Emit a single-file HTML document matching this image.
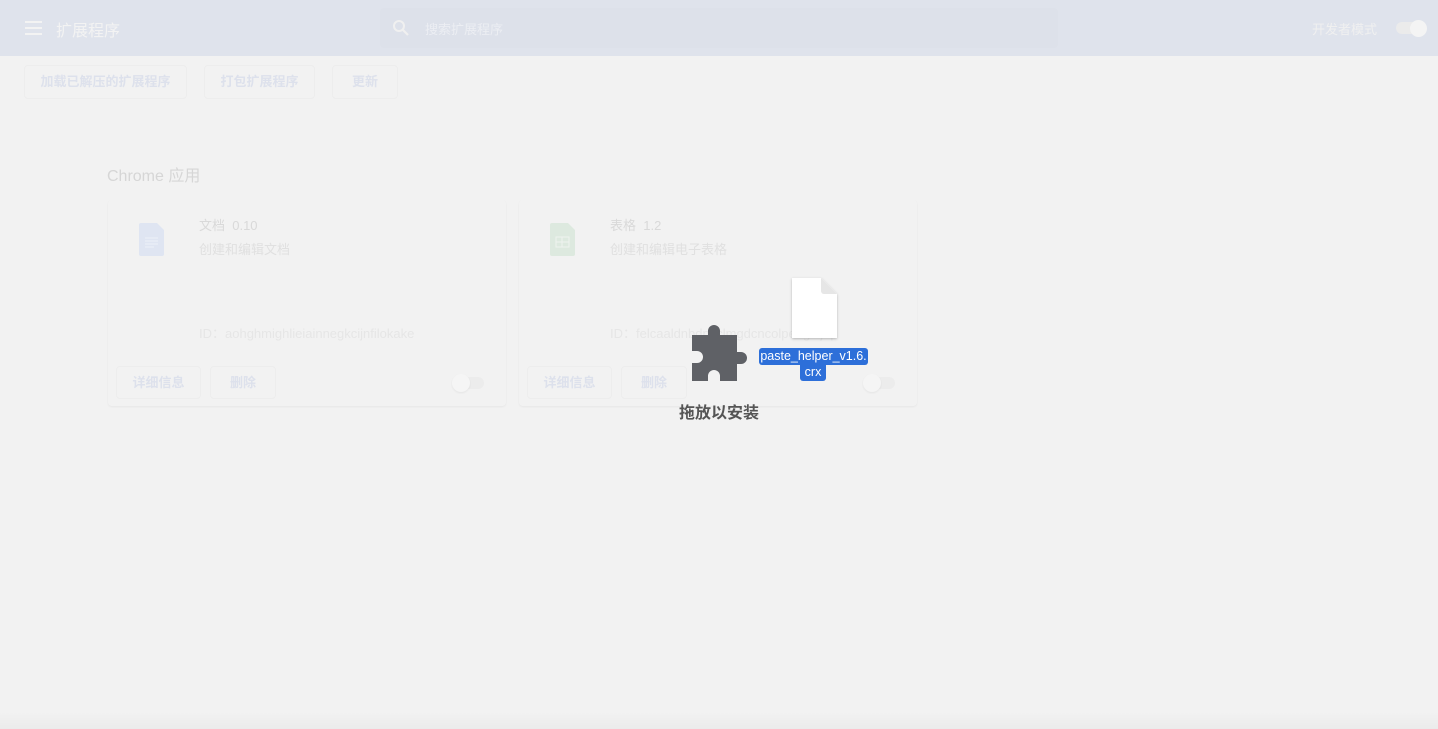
<!DOCTYPE html>
<html><head><meta charset="utf-8"><style>
*{box-sizing:border-box;margin:0;padding:0}
body{width:1438px;height:729px;overflow:hidden;background:#f2f2f2;font-family:"Liberation Sans","Noto Sans CJK SC",sans-serif;position:relative}
.hdr{position:absolute;left:0;top:0;width:1438px;height:56px;background:#dfe3ec}
.abs{position:absolute}
.btn{position:absolute;top:65px;height:34px;border:1px solid #ededed;border-radius:4px;color:#dde1ec;font-size:13px;font-weight:bold;text-align:center;line-height:32px}
.card{position:absolute;top:200px;width:398px;height:206px;background:#f2f2f2;border-radius:4px;box-shadow:0 1px 2px rgba(0,0,0,.05)}
.cb{position:absolute;top:166px;height:33px;border:1px solid #ededed;border-radius:4px;color:#dde1ec;font-size:13px;font-weight:bold;text-align:center;line-height:31px}
.t1{position:absolute;left:91px;top:15px;font-size:13px;color:#d9d9d9}
.t2{position:absolute;left:91px;top:39px;font-size:13px;color:#e0e0e0}
.t3{position:absolute;left:91px;top:123px;font-size:13px;color:#e6e6e6}
.tog{position:absolute;left:346px;top:177px;width:30px;height:12px;border-radius:6px;background:#ececec}
.tog i{position:absolute;left:-2px;top:-3px;width:18px;height:18px;border-radius:50%;background:#f5f5f5;box-shadow:0 1px 2px rgba(0,0,0,.06)}
</style></head><body>
<div class="hdr">
 <div class="abs" style="left:25px;top:21px;width:17px;height:2px;background:#f3f3f3;box-shadow:0 6px 0 #f3f3f3,0 12px 0 #f3f3f3"></div>
 <div class="abs" style="left:56px;top:17px;font-size:16px;color:#f3f3f3">扩展程序</div>
 <div class="abs" style="left:380px;top:8px;width:678px;height:40px;background:#dde1ea;border-radius:4px"></div>
 <svg class="abs" style="left:392px;top:19px" width="18" height="18" viewBox="0 0 18 18"><circle cx="7" cy="7" r="5" fill="none" stroke="#f0f0f0" stroke-width="2"/><path d="M11 11l5 5" stroke="#f0f0f0" stroke-width="2.2"/></svg>
 <div class="abs" style="left:425px;top:19px;font-size:13px;color:#eceef3">搜索扩展程序</div>
 <div class="abs" style="left:1312px;top:19px;font-size:13px;color:#f0f0f0">开发者模式</div>
 <div class="abs" style="left:1396px;top:22px;width:30px;height:12px;border-radius:6px;background:#ebebeb"></div>
 <div class="abs" style="left:1410px;top:20px;width:17px;height:17px;border-radius:50%;background:#f4f4f4"></div>
</div>
<div class="btn" style="left:24px;width:163px">加载已解压的扩展程序</div>
<div class="btn" style="left:204px;width:111px">打包扩展程序</div>
<div class="btn" style="left:332px;width:66px">更新</div>
<div class="abs" style="left:107px;top:162px;font-size:16px;color:#d6d6d6">Chrome 应用</div>

<div class="card" style="left:108px">
 <svg class="abs" style="left:31px;top:23px" width="25" height="33" viewBox="0 0 25 33"><path d="M2 0h16l7 7v24a2 2 0 0 1-2 2H2a2 2 0 0 1-2-2V2a2 2 0 0 1 2-2z" fill="#dfe5f2"/><path d="M6 15h13M6 18h13M6 21h13M6 24h9" stroke="#eef1f8" stroke-width="1"/></svg>
 <div class="t1">文档&nbsp;&nbsp;0.10</div>
 <div class="t2">创建和编辑文档</div>
 <div class="t3">ID：aohghmighlieiainnegkcijnfilokake</div>
 <div class="cb" style="left:8px;width:85px">详细信息</div>
 <div class="cb" style="left:102px;width:66px">删除</div>
 <div class="tog"><i></i></div>
</div>
<div class="card" style="left:519px">
 <svg class="abs" style="left:31px;top:23px" width="25" height="33" viewBox="0 0 25 33"><path d="M2 0h16l7 7v24a2 2 0 0 1-2 2H2a2 2 0 0 1-2-2V2a2 2 0 0 1 2-2z" fill="#dde9df"/><rect x="6" y="14" width="13" height="10" fill="none" stroke="#eef3ef"/><path d="M6 19h13M12 14v10" stroke="#eef3ef"/></svg>
 <div class="t1">表格&nbsp;&nbsp;1.2</div>
 <div class="t2">创建和编辑电子表格</div>
 <div class="t3">ID：felcaaldnbdncclmgdcncolpebgiejap</div>
 <div class="cb" style="left:8px;width:85px">详细信息</div>
 <div class="cb" style="left:102px;width:66px">删除</div>
 <div class="tog"><i></i></div>
</div>

<svg class="abs" style="left:690px;top:324px" width="60" height="58" viewBox="0 0 60 58"><path d="M18 11h-16v16h5a6 6 0 0 1 0 12h-5v18h16v-5a6 6 0 0 1 12 0v5h17v-17h4a6 6 0 0 0 0-12h-4v-17h-17v-4a6 6 0 0 0-12 0z" fill="#5f6166"/></svg>
<svg class="abs" style="left:788px;top:276px" width="54" height="66" viewBox="0 0 54 66"><defs><filter id="s"><feDropShadow dx="0" dy="1" stdDeviation="1.2" flood-opacity=".25"/></filter></defs><path d="M4 2h29l16 16v44H4z" fill="#fff" filter="url(#s)"/><path d="M33 2v13a3 3 0 0 0 3 3h13z" fill="#e6e6e6"/></svg>
<div class="abs" style="left:759px;top:348px;width:109px;height:17px;background:#2d6fd9;border-radius:3px;color:#fff;font-size:12.5px;text-align:center;line-height:17px">paste_helper_v1.6.</div>
<div class="abs" style="left:800px;top:364px;width:26px;height:17px;background:#2d6fd9;border-radius:0 0 3px 3px;color:#fff;font-size:12.5px;text-align:center;line-height:16px">crx</div>
<div class="abs" style="left:659px;top:399px;width:120px;text-align:center;font-size:16px;font-weight:bold;color:#555">拖放以安装</div>
<div class="abs" style="left:0;top:712px;width:1438px;height:17px;background:linear-gradient(#f2f2f2,#ebebeb)"></div>
</body></html>
